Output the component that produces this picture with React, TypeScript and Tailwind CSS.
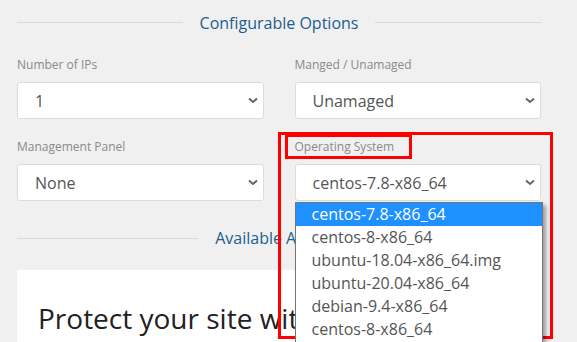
import React from "react";

const font = { fontFamily: '"Open Sans", "Noto Sans", sans-serif' };

function Chevron() {
  return (
    <svg width="10" height="7" viewBox="0 0 10 7" className="shrink-0">
      <path d="M1 1.5 L5 5 L9 1.5" fill="none" stroke="#666" strokeWidth="2" />
    </svg>
  );
}

function SectionTitle({ title }: { title: string }) {
  return (
    <div className="flex items-center gap-[17px]">
      <div className="h-px flex-1 bg-[#dadada]" />
      <span className="text-[16px] leading-6 text-[#1d5d90]">{title}</span>
      <div className="h-px flex-1 bg-[#dadada]" />
    </div>
  );
}

function FakeSelect({ label, value, children }: { label: string; value: string; children?: React.ReactNode }) {
  return (
    <div className="flex flex-col">
      <div className="mb-[9px] text-[12px] leading-[17px] text-[#8a8a8a]">{label}</div>
      <div className="relative">
        <div className="flex h-[37px] items-center justify-between rounded-[3px] border border-[#dcdcdc] bg-white pl-[17px] pr-[5px]">
          <span className="text-[16px] text-[#555]">{value}</span>
          <Chevron />
        </div>
        {children}
      </div>
    </div>
  );
}

const osList = [
  "centos-7.8-x86_64",
  "centos-8-x86_64",
  "ubuntu-18.04-x86_64.img",
  "ubuntu-20.04-x86_64",
  "debian-9.4-x86_64",
  "centos-8-x86_64",
  "debian-10-x86_64",
];

export default function App() {
  return (
    <div className="relative h-[342px] w-[577px] overflow-hidden bg-[#f0f0f0]" style={font}>
      <div className="ml-[17px] w-[524px]">
        {/* Configurable options */}
        <div className="flex h-[42px] items-center pt-[3px]">
          <div className="w-full">
            <SectionTitle title="Configurable Options" />
          </div>
        </div>

        <div className="mt-[14px] grid grid-cols-2 gap-x-[31px] gap-y-[19px]">
          <FakeSelect label="Number of IPs" value="1" />
          <FakeSelect label="Manged / Unamaged" value="Unamaged" />
          <FakeSelect label="Management Panel" value="None" />
          <FakeSelect label="Operating System" value="centos-7.8-x86_64">
            <div className="absolute left-0 top-full z-10 mt-px w-[248px] border border-[#767676] bg-white shadow-[3px_3px_4px_rgba(0,0,0,0.35)]">
              {osList.map((os, i) => (
                <div
                  key={i}
                  className={
                    "h-[23px] pl-[16px] text-[16px] leading-[23px] " +
                    (i === 0 ? "bg-[#1e90ff] text-white" : "text-[#555]")
                  }
                >
                  {os}
                </div>
              ))}
            </div>
          </FakeSelect>
        </div>

        {/* Addons */}
        <div className="mt-[25px]">
          <SectionTitle title="Available Addons" />
        </div>

        <div className="mt-[20px] h-[120px] bg-white pl-[21px] pt-[30px]">
          <div className="text-[28px] leading-[36px] text-[#222]">Protect your site with SSL</div>
        </div>
      </div>

      {/* annotation boxes */}
      <div className="pointer-events-none absolute left-[278px] top-[132px] h-[207px] w-[275px] border-[3px] border-[#ff0000]" />
      <div className="pointer-events-none absolute left-[285px] top-[134px] h-[25px] w-[127px] border-[3px] border-[#ff0000]" />
    </div>
  );
}
